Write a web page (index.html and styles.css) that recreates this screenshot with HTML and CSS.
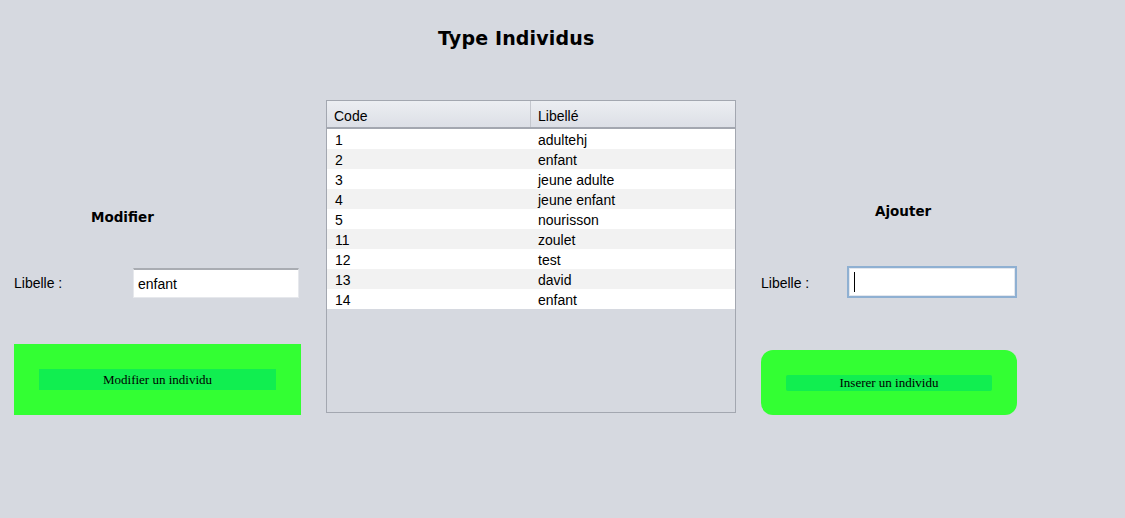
FILE: index.html
```html
<!DOCTYPE html>
<html>
<head>
<meta charset="utf-8">
<link rel="stylesheet" href="styles.css">
</head>
<body>
<h1 class="title">Type Individus</h1>
<div class="main">
  <section class="panel panel-left">
    <h2 class="panel-title">Modifier</h2>
    <div class="field">
      <label class="field-label">Libelle :</label>
      <div class="input input-plain">enfant</div>
    </div>
    <div class="btn btn-square"><span class="btn-inner">Modifier un individu</span></div>
  </section>
  <section class="table">
    <div class="thead">
      <div class="th th-code">Code</div>
      <div class="th">Libellé</div>
    </div>
    <div class="row"><span class="c1">1</span><span class="c2">adultehj</span></div>
    <div class="row alt"><span class="c1">2</span><span class="c2">enfant</span></div>
    <div class="row"><span class="c1">3</span><span class="c2">jeune adulte</span></div>
    <div class="row alt"><span class="c1">4</span><span class="c2">jeune enfant</span></div>
    <div class="row"><span class="c1">5</span><span class="c2">nourisson</span></div>
    <div class="row alt"><span class="c1">11</span><span class="c2">zoulet</span></div>
    <div class="row"><span class="c1">12</span><span class="c2">test</span></div>
    <div class="row alt"><span class="c1">13</span><span class="c2">david</span></div>
    <div class="row"><span class="c1">14</span><span class="c2">enfant</span></div>
  </section>
  <section class="panel panel-right">
    <h2 class="panel-title">Ajouter</h2>
    <div class="field">
      <label class="field-label">Libelle :</label>
      <div class="input input-focus"><span class="caret"></span></div>
    </div>
    <div class="btn btn-round"><span class="btn-inner">Inserer un individu</span></div>
  </section>
</div>
</body>
</html>
```
FILE: styles.css
```css
html, body {
  margin: 0;
  padding: 0;
}
body {
  background: #d6d9e0;
  width: 1125px;
  height: 518px;
  overflow: hidden;
  font-family: "Liberation Sans", Arial, sans-serif;
  color: #000;
}
.title {
  margin: 0;
  padding-top: 26px;
  height: 74px;
  box-sizing: border-box;
  padding-left: 438px;
  font-family: "DejaVu Sans", Tahoma, sans-serif;
  font-size: 19px;
  font-weight: bold;
  line-height: 24px;
  letter-spacing: 0.15px;
}
.main {
  display: grid;
  grid-template-columns: 326px 410px 1fr;
  padding-top: 26px;
}
.panel {
  display: flex;
  flex-direction: column;
}
.panel-title {
  margin: 0;
  font-family: "DejaVu Sans", Tahoma, sans-serif;
  font-size: 13.5px;
  font-weight: bold;
  line-height: 16px;
}
.panel-left {
  padding-left: 14px;
}
.panel-left .panel-title {
  margin-top: 109px;
  padding-left: 77px;
}
.panel-right {
  padding-left: 25px;
}
.panel-right .panel-title {
  margin-top: 103px;
  padding-left: 114px;
}
.field {
  display: flex;
  align-items: center;
  font-size: 14px;
}
.field-label {
  width: 119px;
}
.panel-left .field {
  margin-top: 43px;
}
.panel-right .field {
  margin-top: 47px;
}
.panel-right .field-label {
  width: 86px;
  padding-top: 2px;
}
.input {
  background: #fff;
  box-sizing: border-box;
  display: flex;
  align-items: center;
}
.input-plain {
  width: 166px;
  height: 30px;
  border: 1px solid #e6e8ec;
  border-top: 2px solid #a9acb2;
  padding-left: 4px;
  font-size: 14px;
}
.input-focus {
  width: 170px;
  height: 32px;
  border: 2px solid #8fb0d2;
  box-shadow: inset 0 0 0 1px #e3e7ee;
  padding-left: 5px;
}
.caret {
  display: block;
  width: 1px;
  height: 20px;
  background: #000;
}
.btn {
  background: #33ff33;
  box-sizing: border-box;
  display: flex;
  font-family: "Liberation Serif", "Times New Roman", serif;
  font-size: 13px;
}
.btn-inner {
  background: #11ee50;
  display: flex;
  align-items: center;
  justify-content: center;
  flex: 1;
}
.btn-square {
  margin-top: 46px;
  width: 287px;
  height: 71px;
  padding: 25px 25px 24px 25px;
}
.btn-square .btn-inner {
  height: 21px;
}
.btn-round {
  margin-top: 52px;
  width: 256px;
  height: 65px;
  border-radius: 12px;
  padding: 25px 25px 24px 25px;
}
.btn-round .btn-inner {
  height: 16px;
  border-radius: 2px;
}
.table {
  width: 410px;
  height: 313px;
  box-sizing: border-box;
  border: 1px solid #a3a7b0;
  font-size: 14px;
}
.thead {
  display: flex;
  height: 28px;
  box-sizing: border-box;
  background: linear-gradient(#eceef2, #dcdfe6);
  border-bottom: 2px solid #a3a7b0;
}
.th {
  flex: 1;
  padding-left: 7px;
  display: flex;
  align-items: center;
  padding-top: 3px;
}
.th-code {
  flex: 0 0 204px;
  box-sizing: border-box;
  border-right: 1px solid #c4c7ce;
}
.row {
  display: flex;
  height: 20px;
  align-items: center;
  background: #fff;
  box-sizing: border-box;
  padding-top: 1px;
}
.row.alt {
  background: #f2f2f2;
}
.c1 {
  width: 211px;
  padding-left: 8px;
  box-sizing: border-box;
}
```
